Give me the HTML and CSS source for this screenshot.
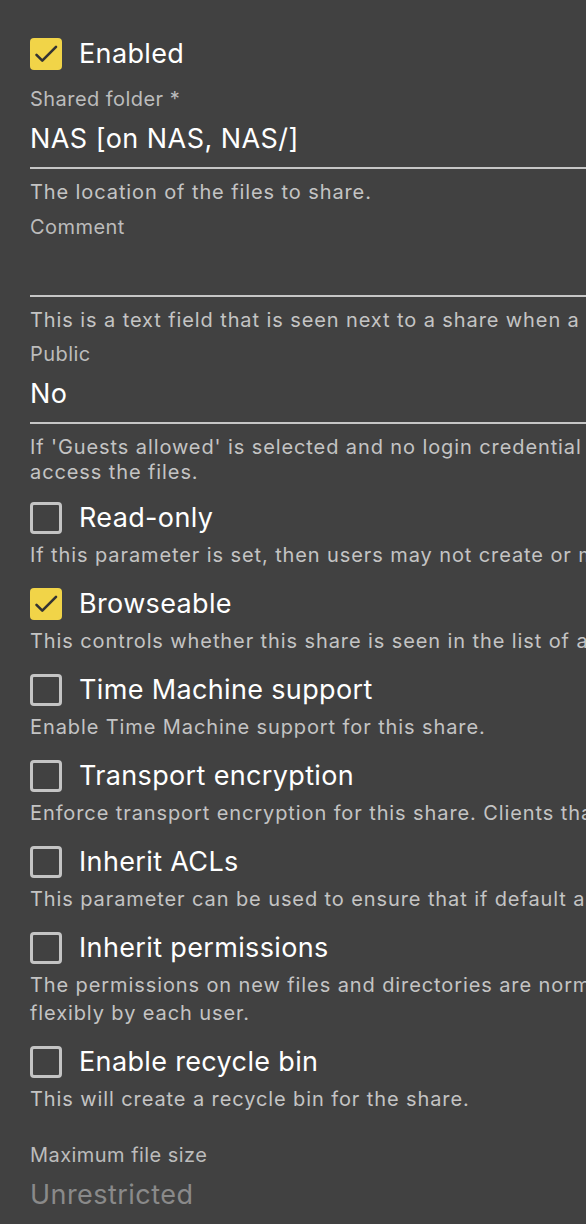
FILE: index.html
```html
<!DOCTYPE html>
<html lang="en">
<head>
<meta charset="utf-8">
<title>SMB share</title>
<link rel="stylesheet" href="styles.css">
</head>
<body>
<form class="form">
  <div class="check check-first">
    <div class="check-row">
      <span class="box box-on"><svg viewBox="0 0 32 32" width="32" height="32"><path d="M6.5 16.8 L12.3 22.6 L26 8.9" fill="none" stroke="#333" stroke-width="2.6" stroke-linecap="round" stroke-linejoin="round"/></svg></span>
      <span class="check-label">Enabled</span>
    </div>
  </div>

  <div class="field field-first">
    <div class="label">Shared folder *</div>
    <div class="input"><span class="value">NAS [on NAS, NAS/]</span></div>
    <div class="help">The location of the files to share.</div>
  </div>

  <div class="field">
    <div class="label">Comment</div>
    <div class="input"><span class="value"></span></div>
    <div class="help">This is a text field that is seen next to a share when a client does a queries to the server, either via the network neighborhood or via net view to list what shares are available.</div>
  </div>

  <div class="field">
    <div class="label">Public</div>
    <div class="input"><span class="value">No</span></div>
    <div class="help">If 'Guests allowed' is selected and no login credential is provided, then access as guest. Always access as guest when 'Guests only' is selected; in this case no password is required to<br>access the files.</div>
  </div>

  <div class="check check-after-field">
    <div class="check-row">
      <span class="box"></span>
      <span class="check-label">Read-only</span>
    </div>
    <div class="check-help">If this parameter is set, then users may not create or modify files in the share.</div>
  </div>

  <div class="check">
    <div class="check-row">
      <span class="box box-on"><svg viewBox="0 0 32 32" width="32" height="32"><path d="M6.5 16.8 L12.3 22.6 L26 8.9" fill="none" stroke="#333" stroke-width="2.6" stroke-linecap="round" stroke-linejoin="round"/></svg></span>
      <span class="check-label">Browseable</span>
    </div>
    <div class="check-help">This controls whether this share is seen in the list of available shares in a net view and in the browse list.</div>
  </div>

  <div class="check">
    <div class="check-row">
      <span class="box"></span>
      <span class="check-label">Time Machine support</span>
    </div>
    <div class="check-help">Enable Time Machine support for this share.</div>
  </div>

  <div class="check">
    <div class="check-row">
      <span class="box"></span>
      <span class="check-label">Transport encryption</span>
    </div>
    <div class="check-help">Enforce transport encryption for this share. Clients that do not support encryption will be denied access to the share.</div>
  </div>

  <div class="check">
    <div class="check-row">
      <span class="box"></span>
      <span class="check-label">Inherit ACLs</span>
    </div>
    <div class="check-help">This parameter can be used to ensure that if default acls exist on parent directories, they are always honored when creating a new file or subdirectory in these parent directories.</div>
  </div>

  <div class="check">
    <div class="check-row">
      <span class="box"></span>
      <span class="check-label">Inherit permissions</span>
    </div>
    <div class="check-help">The permissions on new files and directories are normally governed by create mask and directory mask but the inherit permissions parameter overrides this. This can be particularly useful on large systems with many users, perhaps several thousand, to allow a single [homes] share to be used<br>flexibly by each user.</div>
  </div>

  <div class="check">
    <div class="check-row">
      <span class="box"></span>
      <span class="check-label">Enable recycle bin</span>
    </div>
    <div class="check-help">This will create a recycle bin for the share.</div>
  </div>

  <div class="field field-after-check">
    <div class="label">Maximum file size</div>
    <div class="input input-disabled"><span class="value">Unrestricted</span></div>
  </div>
</form>
</body>
</html>
```
FILE: styles.css
```css
html, body {
  margin: 0;
  padding: 0;
  overflow: hidden;
  background: #414141;
}

body {
  font-family: Inter, "Noto Sans", sans-serif;
  color: #ffffff;
  width: 586px;
  height: 1224px;
}

.form {
  display: flex;
  flex-direction: column;
  padding: 38px 0 0 30px;
}

/* form fields */
.field {
  display: flex;
  flex-direction: column;
  margin-top: 9.5px;
}

.field-first {
  margin-top: 17px;
}

.field-after-check {
  margin-top: 30.5px;
}

.label {
  font-size: 20px;
  line-height: 24px;
  letter-spacing: 0.45px;
  color: #bcbcbc;
  white-space: nowrap;
}

.input {
  padding: 12px 0;
  border-bottom: 2px solid #c6c6c6;
}

.input-disabled {
  border-bottom: none;
}

.value {
  display: block;
  height: 32px;
  font-size: 27px;
  line-height: 32px;
  letter-spacing: 0.45px;
  color: #ffffff;
  white-space: nowrap;
}

.input-disabled .value {
  color: #8a8a8a;
}

.help {
  margin-top: 11px;
  font-size: 20px;
  line-height: 25px;
  letter-spacing: 0.9px;
  color: #c4c4c4;
  white-space: nowrap;
}

/* checkboxes */
.check {
  display: flex;
  flex-direction: column;
  margin-top: 19.3px;
}

.check-first {
  margin-top: 0;
}

.check-after-field {
  margin-top: 17px;
}

.check-row {
  display: flex;
  align-items: center;
  gap: 17px;
  height: 32px;
}

.box {
  box-sizing: border-box;
  width: 32px;
  height: 32px;
  flex: none;
  border: 3px solid #c4c4c4;
  border-radius: 4px;
}

.box-on {
  border: none;
  background: #f1d448;
}

.box svg {
  display: block;
}

.check-label {
  font-size: 27px;
  line-height: 32px;
  letter-spacing: 0.35px;
  color: #ffffff;
  white-space: nowrap;
}

.check-help {
  margin-top: 6.7px;
  font-size: 20px;
  line-height: 28px;
  letter-spacing: 0.9px;
  color: #c4c4c4;
  white-space: nowrap;
}
```
